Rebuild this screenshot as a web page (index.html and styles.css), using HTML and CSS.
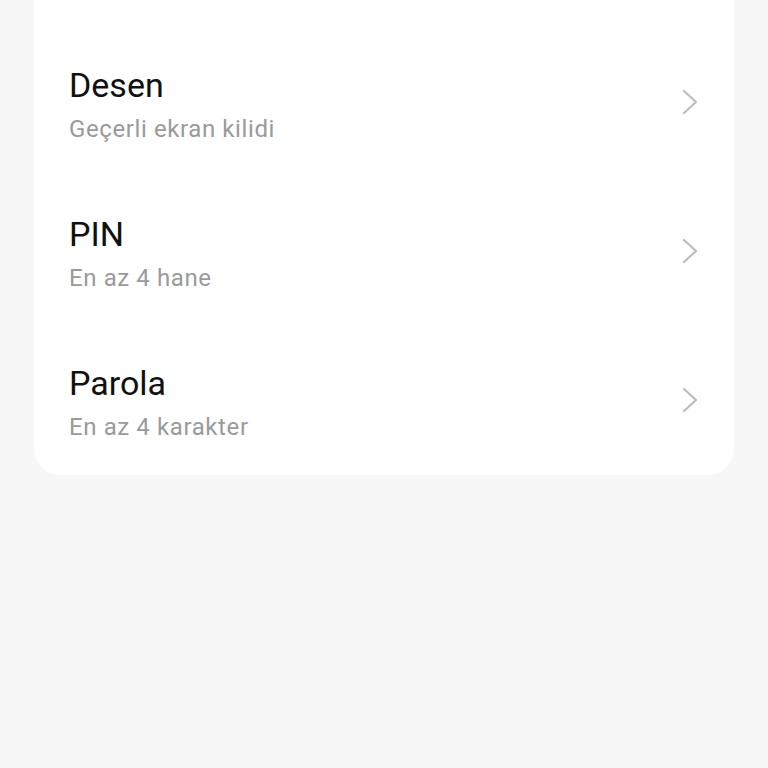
FILE: index.html
```html
<!DOCTYPE html>
<html lang="tr">
<head>
    <meta charset="UTF-8">
    <title>Ekran kilidi</title>
    <link rel="stylesheet" href="styles.css">
</head>
<body>
    <div class="card">
        <div class="row">
            <div class="text">
                <div class="title">Desen</div>
                <div class="subtitle">Geçerli ekran kilidi</div>
            </div>
            <svg class="chevron" width="18" height="26" viewBox="0 0 18 26"><path d="M2 2 L14 13 L2 24" fill="none" stroke="#bdbdbd" stroke-width="2.2" stroke-linecap="round" stroke-linejoin="round"/></svg>
        </div>
        <div class="row">
            <div class="text">
                <div class="title">PIN</div>
                <div class="subtitle">En az 4 hane</div>
            </div>
            <svg class="chevron" width="18" height="26" viewBox="0 0 18 26"><path d="M2 2 L14 13 L2 24" fill="none" stroke="#bdbdbd" stroke-width="2.2" stroke-linecap="round" stroke-linejoin="round"/></svg>
        </div>
        <div class="row">
            <div class="text">
                <div class="title">Parola</div>
                <div class="subtitle">En az 4 karakter</div>
            </div>
            <svg class="chevron" width="18" height="26" viewBox="0 0 18 26"><path d="M2 2 L14 13 L2 24" fill="none" stroke="#bdbdbd" stroke-width="2.2" stroke-linecap="round" stroke-linejoin="round"/></svg>
        </div>
    </div>
</body>
</html>
```

FILE: styles.css
```css
body {
    margin: 0;
    padding: 0;
    background-color: #f7f7f7;
    font-family: Roboto, 'Noto Sans', sans-serif;
    overflow: hidden;
}
.card {
    background: #ffffff;
    margin: -20px 34px 0 34px;
    padding: 50px 34px 0 35px;
    border-radius: 26px;
}
.row {
    display: flex;
    align-items: center;
    justify-content: space-between;
    padding: 35px 0;
}
.row:last-child {
    padding-bottom: 33px;
}
.title {
    font-size: 34px;
    line-height: 40px;
    color: #111111;
}
.subtitle {
    margin-top: 9px;
    font-size: 24px;
    line-height: 30px;
    letter-spacing: 0.6px;
    color: #9a9a9a;
}
.chevron {
    display: block;
    margin-top: -6px;
}
```
